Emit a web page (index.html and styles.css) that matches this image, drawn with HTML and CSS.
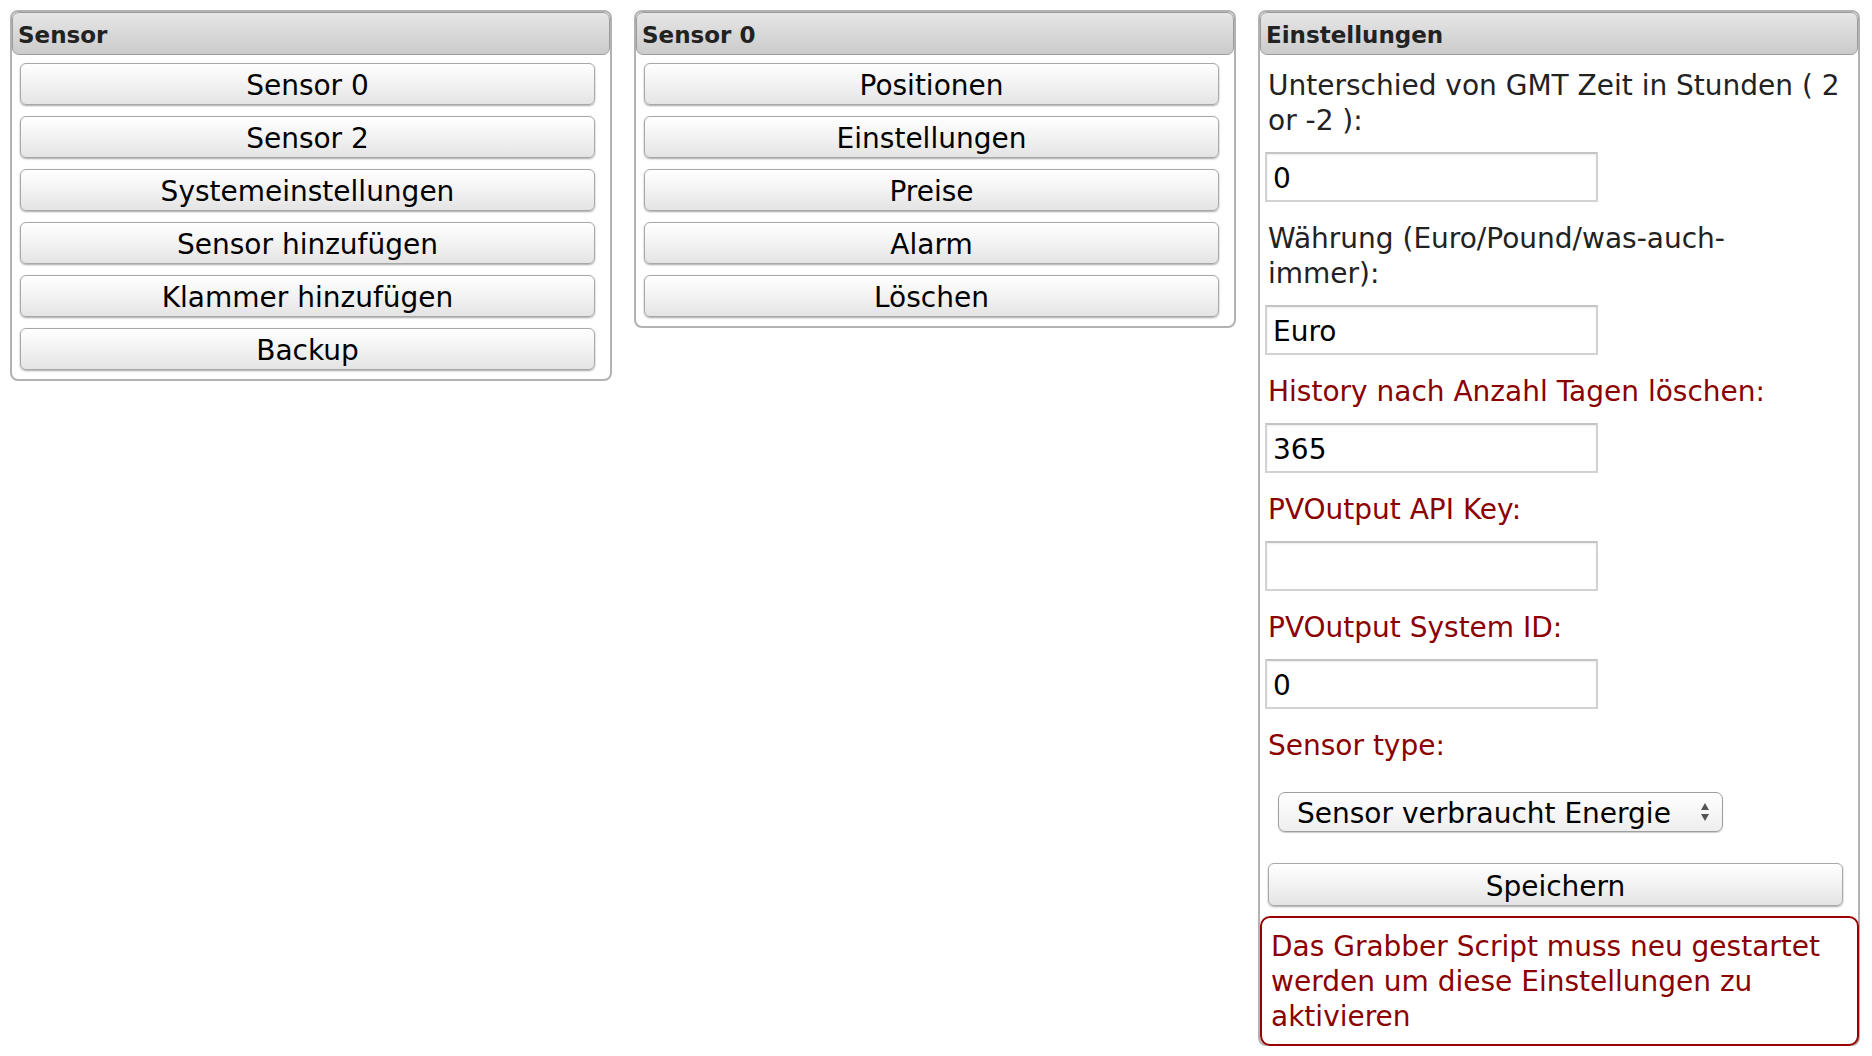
FILE: index.html
```html
<!DOCTYPE html>
<html lang="de">
<head>
<meta charset="utf-8">
<title>Einstellungen</title>
<link rel="stylesheet" href="styles.css">
</head>
<body>
<div class="page">
  <section class="panel">
    <h2 class="panel-head">Sensor</h2>
    <div class="btn-list">
      <button class="btn" type="button">Sensor 0</button>
      <button class="btn" type="button">Sensor 2</button>
      <button class="btn" type="button">Systemeinstellungen</button>
      <button class="btn" type="button">Sensor hinzufügen</button>
      <button class="btn" type="button">Klammer hinzufügen</button>
      <button class="btn" type="button">Backup</button>
    </div>
  </section>
  <section class="panel">
    <h2 class="panel-head">Sensor 0</h2>
    <div class="btn-list">
      <button class="btn" type="button">Positionen</button>
      <button class="btn" type="button">Einstellungen</button>
      <button class="btn" type="button">Preise</button>
      <button class="btn" type="button">Alarm</button>
      <button class="btn" type="button">Löschen</button>
    </div>
  </section>
  <section class="panel">
    <h2 class="panel-head">Einstellungen</h2>
    <form class="settings">
      <label class="field-label">Unterschied von GMT Zeit in Stunden ( 2<br>or -2 ):</label>
      <input class="text-input" type="text" value="0">
      <label class="field-label">Währung (Euro/Pound/was-auch-<br>immer):</label>
      <input class="text-input" type="text" value="Euro">
      <label class="field-label alert">History nach Anzahl Tagen löschen:</label>
      <input class="text-input" type="text" value="365">
      <label class="field-label alert">PVOutput API Key:</label>
      <input class="text-input" type="text" value="">
      <label class="field-label alert">PVOutput System ID:</label>
      <input class="text-input" type="text" value="0">
      <label class="field-label alert">Sensor type:</label>
      <div class="select-wrap">
        <select class="select">
          <option>Sensor verbraucht Energie</option>
          <option>Sensor erzeugt Energie</option>
        </select>
        <svg class="select-arrows" width="10" height="22" viewBox="0 0 10 22">
          <path d="M1 9 L5 2 L9 9 Z" fill="#555"/>
          <path d="M1 13 L9 13 L5 20 Z" fill="#555"/>
        </svg>
      </div>
      <button class="btn btn-save" type="button">Speichern</button>
      <div class="notice">Das Grabber Script muss neu gestartet werden um diese Einstellungen zu aktivieren</div>
    </form>
  </section>
</div>
</body>
</html>
```
FILE: styles.css
```css
* {
  box-sizing: border-box;
}

body {
  margin: 0;
  background: #ffffff;
  font-family: "DejaVu Sans", "Liberation Sans", sans-serif;
  color: #222;
}

.page {
  display: flex;
  align-items: flex-start;
  gap: 22px;
  padding: 10px 12px 0 10px;
}

.panel {
  flex: 1 1 0;
  min-width: 0;
  border: 2px solid #b2b2b2;
  border-radius: 8px;
  padding: 0 15px 9px 8px;
  background: #fff;
}

.panel-head {
  margin: 0 -15px 8px -8px;
  padding: 8px 5px 5px;
  font-size: 23px;
  line-height: 28px;
  font-weight: bold;
  color: #222;
  background: linear-gradient(#e6e6e6, #cbcbcb);
  border: 1px solid #9c9c9c;
  border-radius: 7px;
}

.btn-list {
  display: flex;
  flex-direction: column;
  gap: 11px;
}

.btn {
  display: block;
  width: 100%;
  height: 42px;
  margin: 0;
  padding: 4px 0 0;
  font-family: "DejaVu Sans", "Liberation Sans", sans-serif;
  font-size: 28px;
  line-height: 36px;
  color: #000;
  border: 1px solid #a8a8a8;
  border-radius: 6px;
  background: linear-gradient(#ffffff, #f1f1f1 55%, #e4e4e4);
  box-shadow: 0 1px 2px rgba(0, 0, 0, 0.35);
}

.settings {
  padding-top: 2px;
}

.field-label {
  display: block;
  margin: 0;
  padding-top: 3px;
  font-size: 28px;
  line-height: 35px;
  color: #222;
}

.field-label.alert {
  color: #8b0000;
}

.text-input {
  display: block;
  width: 333px;
  height: 50px;
  margin: 14px 0 16px -3px;
  padding: 3px 6px 0;
  font-family: "DejaVu Sans", "Liberation Sans", sans-serif;
  font-size: 28px;
  color: #000;
  background: #fff;
  border: 2px solid #d2d2d2;
  border-top-color: #c4c4c4;
  box-shadow: inset 0 1px 2px rgba(0, 0, 0, 0.08);
  outline: none;
}

.select-wrap {
  position: relative;
  width: 445px;
  height: 40px;
  margin: 29px 0 0 10px;
}

.select {
  width: 100%;
  height: 100%;
  margin: 0;
  padding: 3px 40px 0 18px;
  appearance: none;
  -webkit-appearance: none;
  font-family: "DejaVu Sans", "Liberation Sans", sans-serif;
  font-size: 28px;
  color: #000;
  border: 1px solid #9e9e9e;
  border-radius: 7px;
  background: linear-gradient(#ffffff, #eeeeee);
  box-shadow: 0 1px 1px rgba(0, 0, 0, 0.2);
}

.select-arrows {
  position: absolute;
  right: 13px;
  top: 9px;
  pointer-events: none;
}

.btn-save {
  height: 43px;
  margin-top: 31px;
}

.notice {
  margin: 10px -16px -11px -8px;
  padding: 11px 8px 10px 9px;
  font-size: 28px;
  line-height: 35px;
  color: #8b0000;
  border: 2px solid #9b0000;
  border-radius: 10px;
  background: #fff;
}
```
